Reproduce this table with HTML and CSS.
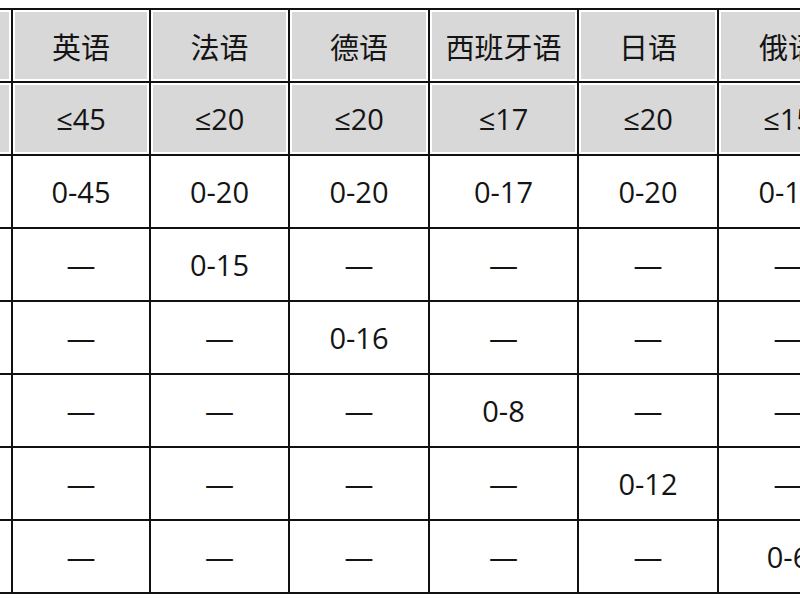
FILE: index.html
```html
<!DOCTYPE html>
<html lang="zh-CN">
<head>
<meta charset="utf-8">
<title>语种分值表</title>
<link rel="stylesheet" href="styles.css">
</head>
<body>
<div class="wrap">
<table class="score">
<colgroup>
<col class="c-label">
<col class="c-a">
<col class="c-b">
<col class="c-c">
<col class="c-d">
<col class="c-e">
<col class="c-f">
</colgroup>
<tr class="head">
<td></td><td>英语</td><td>法语</td><td>德语</td><td>西班牙语</td><td>日语</td><td>俄语</td>
</tr>
<tr class="head">
<td></td><td>≤45</td><td>≤20</td><td>≤20</td><td>≤17</td><td>≤20</td><td>≤15</td>
</tr>
<tr>
<td></td><td>0-45</td><td>0-20</td><td>0-20</td><td>0-17</td><td>0-20</td><td>0-15</td>
</tr>
<tr>
<td></td><td>—</td><td>0-15</td><td>—</td><td>—</td><td>—</td><td>—</td>
</tr>
<tr>
<td></td><td>—</td><td>—</td><td>0-16</td><td>—</td><td>—</td><td>—</td>
</tr>
<tr>
<td></td><td>—</td><td>—</td><td>—</td><td>0-8</td><td>—</td><td>—</td>
</tr>
<tr>
<td></td><td>—</td><td>—</td><td>—</td><td>—</td><td>0-12</td><td>—</td>
</tr>
<tr>
<td></td><td>—</td><td>—</td><td>—</td><td>—</td><td>—</td><td>0-6</td>
</tr>
</table>
</div>
</body>
</html>
```

FILE: styles.css
```css
html, body {
  margin: 0;
  padding: 0;
  background: #ffffff;
}

.wrap {
  width: 800px;
  height: 600px;
  overflow: hidden;
  padding-top: 8px;
  box-sizing: border-box;
}

.score {
  width: 946px;
  border-collapse: collapse;
  table-layout: fixed;
  margin-left: -89px;
  font-family: "Open Sans", "Noto Sans CJK SC", sans-serif;
  font-size: 29px;
  color: #141414;
}

.c-label { width: 100px; }
.c-a { width: 138px; }
.c-b { width: 139px; }
.c-c { width: 140px; }
.c-d { width: 149px; }
.c-e { width: 140px; }
.c-f { width: 140px; }

.score td {
  border: 2px solid #111111;
  height: 71px;
  padding: 0;
  text-align: center;
  vertical-align: middle;
  white-space: nowrap;
  background: #ffffff;
}

.head td {
  background: #d8d8d8;
  box-shadow: inset 0 0 0 2px #ffffff;
}
```
